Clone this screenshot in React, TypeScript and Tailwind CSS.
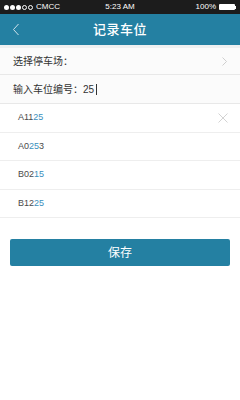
import React from "react";

const font = { fontFamily: '"Liberation Sans", "Noto Sans CJK SC", sans-serif' };

function Hl({ code, start }: { code: string; start: number }) {
  return (
    <span>
      <span className="text-[#4a4a4a]">{code.slice(0, start)}</span>
      <span className="text-[#3a8fbd]">{code.slice(start, start + 2)}</span>
      <span className="text-[#4a4a4a]">{code.slice(start + 2)}</span>
    </span>
  );
}

function Dot({ filled }: { filled: boolean }) {
  return (
    <span
      className={
        filled
          ? "w-[5px] h-[5px] rounded-full bg-white"
          : "w-[5px] h-[5px] rounded-full border border-white"
      }
    />
  );
}

export default function App() {
  const items = [
    { code: "A1125", start: 3, x: true },
    { code: "A0253", start: 2, x: false },
    { code: "B0215", start: 3, x: false },
    { code: "B1225", start: 3, x: false },
  ];
  return (
    <div className="w-[240px] h-[400px] bg-white flex flex-col overflow-hidden" style={font}>
      <div className="h-[14px] bg-[#1c1c1c] text-white text-[8px] flex items-center justify-between px-[4px] relative">
        <div className="flex items-center gap-[1px]">
          <Dot filled />
          <Dot filled />
          <Dot filled />
          <Dot filled={false} />
          <Dot filled={false} />
          <span className="ml-[2px]">CMCC</span>
        </div>
        <span className="absolute left-0 right-0 text-center pointer-events-none">5:23 AM</span>
        <div className="flex items-center gap-[3px]">
          <span>100%</span>
          <div className="flex items-center">
            <div className="w-[16px] h-[6px] bg-white rounded-[1px]" />
            <div className="w-[1px] h-[3px] bg-white" />
          </div>
        </div>
      </div>
      <div className="h-[31px] bg-[#2480a2] flex items-center justify-center relative">
        <svg className="absolute left-[12px] top-[9px]" width="8" height="13" viewBox="0 0 8 13">
          <path d="M6.5 1 L1.5 6.5 L6.5 12" fill="none" stroke="#cfe3ec" strokeWidth="1" />
        </svg>
        <span className="text-white text-[13px] font-medium tracking-[0.5px]">记录车位</span>
      </div>
      <div className="h-[3px] bg-[#eef0f1]" />
      <div className="bg-[#fbfbfb]">
        <div className="h-[27px] border-b border-[#e8e8e8] flex items-center justify-between pl-[13px] pr-[13px]">
          <span className="text-[10px] text-[#333]">选择停车场：</span>
          <svg width="5" height="9" viewBox="0 0 5 9">
            <path d="M0.5 0.5 L4.5 4.5 L0.5 8.5" fill="none" stroke="#c4c4c4" strokeWidth="0.8" />
          </svg>
        </div>
        <div className="h-[29px] border-b border-[#e8e8e8] flex items-center pl-[13px]">
          <span className="text-[10px] text-[#333]">输入车位编号：25</span>
          <span className="w-[1px] h-[11px] bg-[#333] ml-[2px]" />
        </div>
      </div>
      <div>
        {items.map((it) => (
          <div
            key={it.code}
            className="h-[28.5px] border-b border-[#eeeeee] flex items-center justify-between pl-[18px] pr-[12px]"
          >
            <span className="text-[9px]">
              <Hl code={it.code} start={it.start} />
            </span>
            {it.x && (
              <svg width="10" height="10" viewBox="0 0 10 10">
                <path d="M0.5 0.5 L9.5 9.5 M9.5 0.5 L0.5 9.5" stroke="#c8c8c8" strokeWidth="0.8" />
              </svg>
            )}
          </div>
        ))}
      </div>
      <div className="px-[10px] mt-[21px]">
        <button className="w-full h-[27px] bg-[#2480a2] rounded-[2px] text-white text-[12px] flex items-center justify-center">
          保存
        </button>
      </div>
    </div>
  );
}
